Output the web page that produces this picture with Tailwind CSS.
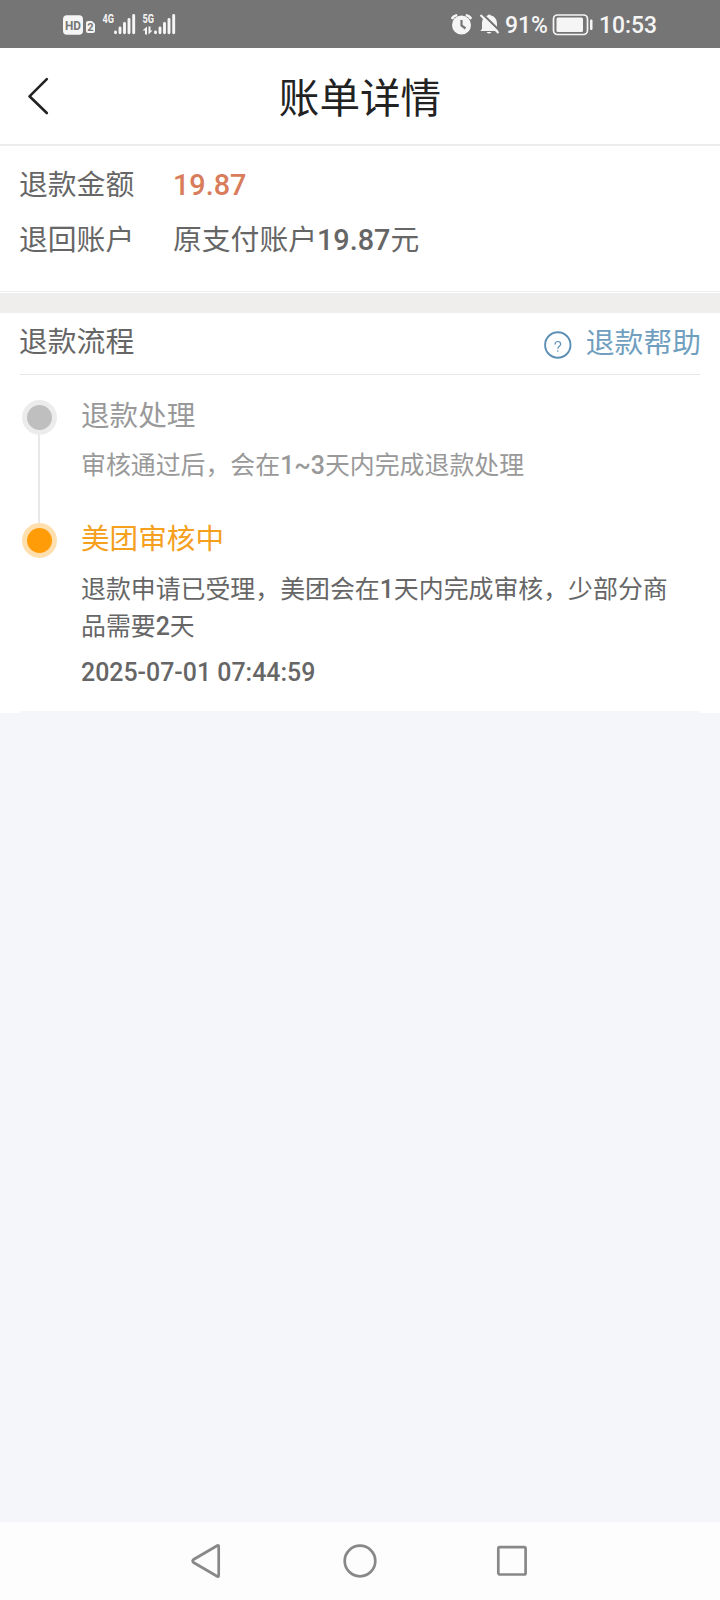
<!DOCTYPE html>
<html lang="zh-CN">
<head>
<meta charset="utf-8">
<title>账单详情</title>
<script src="https://cdn.jsdelivr.net/npm/@tailwindcss/browser@4"></script>
</head>
<body class="flex h-[1600px] w-[720px] flex-col overflow-hidden bg-[#f4f6fa] font-['Roboto','Noto_Sans_CJK_SC',sans-serif] font-normal text-[#666]">
<div class="flex h-12 shrink-0 justify-between bg-[#757575] text-[#f5f5f5]">
  <svg class="ml-[50px] h-12 w-[140px]" viewBox="0 0 140 48" fill="currentColor" font-family="Roboto">
    <rect x="13" y="15.300" width="20" height="19.500" rx="4"/>
    <text x="23" y="29.500" font-size="13" font-weight="700" fill="#757575" text-anchor="middle" textLength="16" lengthAdjust="spacingAndGlyphs">HD</text>
    <path d="M38 21h4l3 3v7q0 2-2 2h-5q-2 0-2-2v-8q0-2 2-2z"/>
    <text x="40.500" y="31" font-size="11" font-weight="700" fill="#757575" text-anchor="middle">2</text>
    <text x="52.500" y="23" font-size="12" font-weight="700" textLength="11.500" lengthAdjust="spacingAndGlyphs">4G</text>
    <text x="92.500" y="23" font-size="12" font-weight="700" textLength="11.500" lengthAdjust="spacingAndGlyphs">5G</text>
    <g fill="none" stroke="currentColor" stroke-width="2.900" stroke-linecap="round">
      <path d="M65.500 32v.700M70 28v4.700M74.500 23.500v9.200M79 19.500v13.200M83.700 15.500v17.200"/>
      <path d="M105.500 32v.700M110 28v4.700M114.500 23.500v9.200M119 19.500v13.200M123.700 15.500v17.200"/>
    </g>
    <path d="M92.500 30.500l4.500-4v8h-2v-4zM98.500 26.500h2v4h2l-4 4z"/>
  </svg>
  <svg class="mr-[50px] h-12 w-[230px]" viewBox="0 0 230 48" fill="currentColor" font-family="Roboto">
    <circle cx="21.500" cy="25" r="9.500"/>
    <path d="M12.500 18q1-2 3.500-2.500M27 15.500q2.500.500 3.500 2.500" fill="none" stroke="currentColor" stroke-width="2.800" stroke-linecap="round"/>
    <path d="M21.500 20v5.500l4 3" fill="none" stroke="#757575" stroke-width="2.200"/>
    <path d="M42 28.500V23q0-6 5.500-7.500Q49 13.500 51 15.500 57 17 57 24v4.500l1.500 2.500h-18z"/>
    <path d="M46.500 32h5q-2.500 3-5 0z"/>
    <path d="M42 13.500L60.500 31.500" stroke="#757575" stroke-width="2.200"/>
    <path d="M40.500 15L58.500 33" stroke="currentColor" stroke-width="2.200"/>
    <text x="65" y="33" font-size="23" font-weight="500" textLength="43" lengthAdjust="spacingAndGlyphs">91%</text>
    <rect x="113.500" y="15" width="34" height="19.500" rx="4" fill="none" stroke="currentColor" stroke-width="1.700"/>
    <rect x="116.500" y="17.500" width="26.500" height="14.500" rx="1.500"/>
    <rect x="150" y="19.500" width="2.500" height="10.500" rx="1"/>
    <text x="159" y="33" font-size="23" font-weight="500" textLength="58" lengthAdjust="spacingAndGlyphs">10:53</text>
  </svg>
</div>

<header class="grid h-[98px] shrink-0 grid-cols-[80px_1fr_80px] items-center border-b-2 border-[#ededed] bg-white">
  <svg class="ml-[24px] size-10" viewBox="0 0 40 40" fill="none" stroke="#222" stroke-width="2.600" stroke-linecap="round" stroke-linejoin="round"><path d="M22.800 3.200L5.500 20.300 22.800 37"/></svg>
  <h1 class="pt-[6px] text-center text-[40.600px] font-normal leading-[60px] text-[#222]">账单详情</h1>
</header>

<section class="flex h-[146px] shrink-0 flex-col border-b border-[#ececec] bg-white px-[19px] pt-[12px] text-[28.800px]">
  <div class="flex h-[55px] items-center"><span class="w-[154px]">退款金额</span><span class="font-medium text-[#d97c5b]">19.87</span></div>
  <div class="flex h-[55px] items-center"><span class="w-[154px]">退回账户</span><span>原支付账户<b class="font-medium">19.87</b>元</span></div>
</section>
<div class="h-[21px] shrink-0 border-t border-white bg-[#efeeec]"></div>

<main class="flex h-[400px] shrink-0 flex-col bg-white px-5">
  <div class="flex h-[62px] shrink-0 items-center justify-between border-b border-[#e8e8e8] text-[28.800px]">
    <h2 class="-ml-px pb-0.5">退款流程</h2>
    <a class="flex items-center gap-[14px] text-[#719fbf]">
      <svg class="mt-0.5 size-7" viewBox="0 0 28 28" fill="none" stroke="#5c8fb5"><circle cx="13.800" cy="14" r="12.700" stroke-width="1.900"/><path d="M11 13.500q0-3 2.800-3t2.800 2.700c0 2-2.800 2-2.800 4.500M13.800 19.300v1.500" stroke-width="1.200"/></svg>
      <span class="-mr-px text-[28.800px]">退款帮助</span>
    </a>
  </div>
  <ol class="flex flex-1 flex-col">
    <li class="flex h-[123px] shrink-0">
      <div class="flex w-[61px] flex-col items-start pt-[25px]">
        <i class="ml-0.5 size-[35px] shrink-0 rounded-full border-5 border-[#ececec] bg-[#bfbfbf]"></i>
        <i class="ml-[18px] w-0.5 flex-1 bg-[#e8e8e8]"></i>
      </div>
      <div class="pt-[21px] text-[#999]">
        <h3 class="text-[28.600px] leading-[40px]">退款处理</h3>
        <p class="mt-[11px] text-[24.900px] leading-[37px]">审核通过后，会在<b class="font-medium">1~3</b>天内完成退款处理</p>
      </div>
    </li>
    <li class="flex flex-1">
      <div class="flex w-[61px] shrink-0 flex-col">
        <i class="ml-[18px] h-[25px] w-0.5 bg-[#e8e8e8]"></i>
        <i class="ml-0.5 size-[35px] rounded-full border-5 border-[#ffdfae] bg-[#ff9c08]"></i>
      </div>
      <div class="pt-[21px]">
        <h3 class="text-[28.600px] leading-[40px] text-[#f5a01e]">美团审核中</h3>
        <p class="mt-[12px] text-[24.900px] leading-[37.400px]">退款申请已受理，美团会在<b class="font-medium">1</b>天内完成审核，少部分商<br>品需要<b class="font-medium">2</b>天</p>
        <time class="mt-[8px] block text-[24.900px] font-medium leading-[37px]">2025-07-01 07:44:59</time>
      </div>
    </li>
  </ol>
  <div class="h-0.5 shrink-0 bg-[#f4f6f8]"></div>
</main>

<nav class="mt-auto flex h-[78px] shrink-0 items-center justify-between bg-[#fdfdfd] px-[190px] text-[#888]">
  <svg class="h-9 w-[31px]" viewBox="0 0 31 36" fill="none" stroke="currentColor" stroke-width="2.700" stroke-linejoin="round"><path d="M27.500 2.500q1.200-.500 1.200 1v29q0 1.500-1.200 1L3.500 19.500q-1.800-1.500 0-3z"/></svg>
  <svg class="h-9 w-10" viewBox="0 0 40 36" fill="none" stroke="currentColor" stroke-width="2.700"><circle cx="22" cy="18" r="15.300"/></svg>
  <svg class="h-9 w-[35px]" viewBox="0 0 35 36" fill="none" stroke="currentColor" stroke-width="2.700"><rect x="3.300" y="4.200" width="27.300" height="27.300" rx="1.500"/></svg>
</nav>
</body>
</html>
